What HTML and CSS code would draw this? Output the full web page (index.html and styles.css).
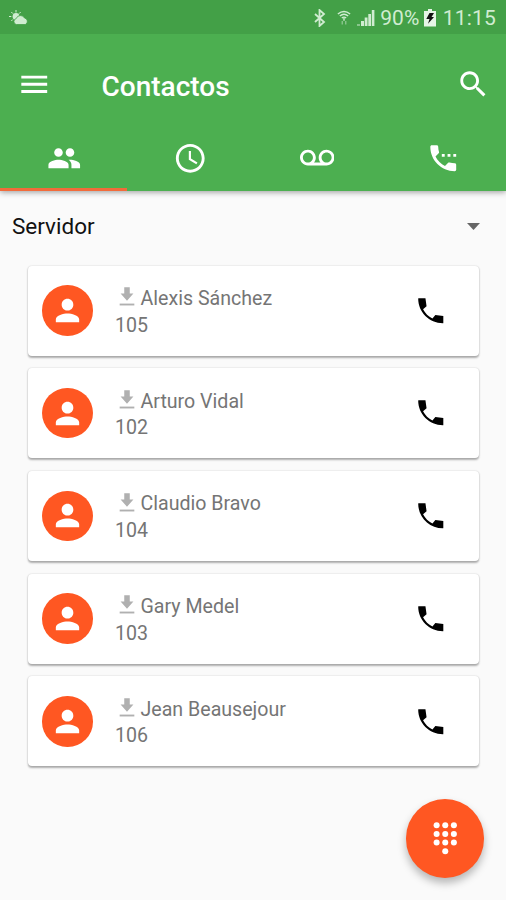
FILE: index.html
```html
<!DOCTYPE html>
<html lang="es">
<head>
<meta charset="utf-8">
<title>Contactos</title>
<link rel="stylesheet" href="styles.css">
</head>
<body>
<svg class="defs" aria-hidden="true">
  <symbol id="person" viewBox="0 0 24 24"><path d="M12 12c2.210 0 4-1.790 4-4s-1.790-4-4-4-4 1.790-4 4 1.790 4 4 4zm0 2c-2.670 0-8 1.340-8 4v2h16v-2c0-2.660-5.330-4-8-4z"/></symbol>
  <symbol id="download" viewBox="0 0 24 24" preserveAspectRatio="none"><path d="M19 9h-4V3H9v6H5l7 7 7-7z"/><path d="M4 18.800h16v1.800H4z"/></symbol>
  <symbol id="call" viewBox="0 0 24 24"><path d="M6.620 10.790c1.440 2.830 3.760 5.140 6.590 6.590l2.200-2.200c.27-.27.67-.36 1.020-.24 1.120.37 2.330.57 3.570.57.55 0 1 .45 1 1V20c0 .55-.45 1-1 1-9.390 0-17-7.610-17-17 0-.55.45-1 1-1h3.500c.55 0 1 .45 1 1 0 1.250.2 2.450.57 3.570.11.35.03.74-.25 1.020l-2.200 2.200z"/></symbol>
  <symbol id="dial" viewBox="0 0 24 24"><path d="M3.300 3H8.200L9 8.700 6.500 10.900C7.900 13.700 10.400 16.200 13.200 17.500L15.300 15 21 15.800V20.700Q21 21 20.700 21C10.900 21 3 13.100 3 3.300Q3 3 3.300 3z"/></symbol>
</svg>
<header class="header">
  <div class="status">
    <svg class="weather" viewBox="0 0 20 16"><g class="rays"><path d="M7 0v2.500M2.300 2l1.600 1.600M0 6.500h2.300M2.300 11l1.500-1.500M11.700 2l-1.600 1.600"/></g><circle cx="7" cy="6.500" r="3.400"/><path class="cloud" d="M7.500 14.500a3 3 0 0 1-.3-5.900 4.500 4.500 0 0 1 8.300-.6 3.400 3.400 0 0 1 .8 6.500z"/></svg>
    <svg class="bluetooth" viewBox="0 0 14 18"><path d="M2 5l9 8-4.500 4V1L11 5l-9 8"/></svg>
    <svg class="wifi" viewBox="0 0 16 18"><path d="M1 4.500Q8-1.500 15 4.500M3.200 6.800Q8 2.700 12.800 6.800M5.500 9Q8 7 10.500 9"/><path d="M8 9v3"/><path class="faint" d="M6 12.500v4M10 12.500v4"/></svg>
    <svg class="signal" viewBox="0 0 18 18"><path class="faint" d="M0 15h3v2H0z"/><path d="M4 12h3v5H4zM7.700 8.500h2.800V17H7.700zM11.300 5H14v12h-2.700zM14.800 1h2.600v16h-2.600z"/></svg>
    <span class="percent">90%</span>
    <svg class="battery" viewBox="0 0 12 18"><path d="M4 0h4v2h4v15.500H0V2h4z"/><path class="bolt" d="M5.500 4H10L7.500 8H10L4 14.800 5.500 10H2.300z"/></svg>
    <span class="time">11:15</span>
  </div>
  <div class="toolbar">
    <svg class="icon" viewBox="0 0 24 24"><path d="M3 18h18v-2H3v2zm0-5h18v-2H3v2zm0-7v2h18V6H3z"/></svg>
    <h1 class="title">Contactos</h1>
    <svg class="icon search" viewBox="0 0 24 24"><path d="M15.500 14h-.79l-.28-.27C15.410 12.590 16 11.110 16 9.500 16 5.910 13.090 3 9.500 3S3 5.910 3 9.500 5.910 16 9.500 16c1.610 0 3.090-.59 4.230-1.570l.27.28v.79l5 4.990L20.490 19l-4.990-5zm-6 0C7.010 14 5 11.990 5 9.500S7.010 5 9.500 5 14 7.010 14 9.500 11.990 14 9.500 14z"/></svg>
  </div>
  <nav class="tabs">
    <div class="tab active"><svg class="icon" viewBox="0 0 24 24"><path d="M16 11c1.660 0 2.990-1.340 2.990-3S17.660 5 16 5s-3 1.340-3 3 1.340 3 3 3zm-8 0c1.660 0 2.990-1.340 2.990-3S9.660 5 8 5 5 6.340 5 8s1.340 3 3 3zm0 2c-2.330 0-7 1.170-7 3.500V19h14v-2.500c0-2.330-4.670-3.500-7-3.500zm8 0c-.29 0-.62.020-.97.050 1.160.84 1.970 1.970 1.970 3.450V19h6v-2.500c0-2.330-4.670-3.500-7-3.500z"/></svg></div>
    <div class="tab"><svg class="icon" viewBox="0 0 24 24"><path d="M11.990 2C6.470 2 2 6.480 2 12s4.470 10 9.990 10C17.520 22 22 17.520 22 12S17.520 2 11.990 2zM12 20c-4.420 0-8-3.580-8-8s3.580-8 8-8 8 3.580 8 8-3.580 8-8 8zm.5-13H11v6l5.250 3.150.75-1.230-4.500-2.670z"/></svg></div>
    <div class="tab"><svg class="icon" viewBox="0 0 24 24"><path d="M18.500 6C15.460 6 13 8.460 13 11.500c0 1.330.47 2.550 1.260 3.500H9.740c.79-.95 1.260-2.170 1.260-3.500C11 8.460 8.540 6 5.500 6S0 8.460 0 11.500 2.460 17 5.500 17h13c3.040 0 5.500-2.460 5.500-5.500S21.540 6 18.500 6zm-13 9C3.570 15 2 13.430 2 11.500S3.570 8 5.500 8 9 9.570 9 11.500 7.430 15 5.500 15zm13 0c-1.930 0-3.500-1.570-3.500-3.500S16.570 8 18.500 8 22 9.570 22 11.500 20.430 15 18.500 15z"/></svg></div>
    <div class="tab"><svg class="icon" viewBox="0 0 24 24"><use href="#call"/><path d="M11 9h2v2h-2zM15 9h2v2h-2zM19 9h2v2h-2z"/></svg></div>
  </nav>
</header>
<main>
  <div class="server"><span>Servidor</span><svg class="caret" viewBox="0 0 14 8"><path d="M0 0h14L7 7.500z"/></svg></div>
  <ul class="contacts">
    <li class="card"><span class="avatar"><svg><use href="#person"/></svg></span><div class="info"><div class="name"><svg><use href="#download"/></svg>Alexis Sánchez</div><div>105</div></div><svg class="call"><use href="#dial"/></svg></li>
    <li class="card"><span class="avatar"><svg><use href="#person"/></svg></span><div class="info"><div class="name"><svg><use href="#download"/></svg>Arturo Vidal</div><div>102</div></div><svg class="call"><use href="#dial"/></svg></li>
    <li class="card"><span class="avatar"><svg><use href="#person"/></svg></span><div class="info"><div class="name"><svg><use href="#download"/></svg>Claudio Bravo</div><div>104</div></div><svg class="call"><use href="#dial"/></svg></li>
    <li class="card"><span class="avatar"><svg><use href="#person"/></svg></span><div class="info"><div class="name"><svg><use href="#download"/></svg>Gary Medel</div><div>103</div></div><svg class="call"><use href="#dial"/></svg></li>
    <li class="card"><span class="avatar"><svg><use href="#person"/></svg></span><div class="info"><div class="name"><svg><use href="#download"/></svg>Jean Beausejour</div><div>106</div></div><svg class="call"><use href="#dial"/></svg></li>
  </ul>
</main>
<div class="fab"><svg class="icon" viewBox="0 0 24 24"><circle cx="6" cy="3" r="2.100"/><circle cx="12" cy="3" r="2.100"/><circle cx="18" cy="3" r="2.100"/><circle cx="6" cy="9" r="2.100"/><circle cx="12" cy="9" r="2.100"/><circle cx="18" cy="9" r="2.100"/><circle cx="6" cy="15" r="2.100"/><circle cx="12" cy="15" r="2.100"/><circle cx="18" cy="15" r="2.100"/><circle cx="12" cy="21" r="2.100"/></svg></div>
</body>
</html>
```
FILE: styles.css
```css
* { box-sizing: border-box; }
body {
  margin: 0;
  height: 900px;
  overflow: hidden;
  position: relative;
  background: #fafafa;
  font-family: Roboto, "Liberation Sans", sans-serif;
}
svg { display: block; flex: none; fill: currentColor; }
.defs { position: absolute; width: 0; height: 0; }
.icon { width: 34.500px; height: 34.500px; }

.header {
  height: 191px;
  background: #4caf50;
  color: #fff;
  box-shadow: 0 1px 6px rgba(0, 0, 0, .4);
}
.status {
  display: flex;
  align-items: center;
  height: 34px;
  padding: 2px 10px 0 9px;
  background: #43a047;
  color: #d0ecd1;
  font-size: 21px;
}
.weather { width: 20px; height: 16px; margin-right: auto; }
.rays { fill: none; stroke: currentColor; stroke-width: 1; }
.cloud { stroke: #43a047; stroke-width: .8; }
.bluetooth { width: 14px; height: 18px; margin-right: 10px; fill: none; stroke: currentColor; stroke-width: 1.800; }
.wifi { width: 14px; height: 18px; margin-right: 6px; fill: none; stroke: currentColor; stroke-width: 1.600; }
.signal { width: 18px; height: 18px; margin-right: 5px; }
.faint { opacity: .5; }
.percent { width: 43.500px; letter-spacing: .1px; }
.battery { width: 12px; height: 18px; margin-right: 7px; color: #e6f5e6; }
.bolt { fill: #111; }
.time { letter-spacing: .2px; }

.toolbar {
  display: flex;
  align-items: center;
  height: 91px;
  padding: 9px 16px 0 17px;
}
.title { margin: 6px 0 0 50px; font-size: 28px; font-weight: 500; line-height: 34px; }
.search { margin-left: auto; }

.tabs { display: flex; height: 66px; }
.tab {
  flex: 1;
  display: flex;
  justify-content: center;
  align-items: center;
  padding: 3px 0 0 1px;
  border-bottom: 3px solid transparent;
}
.active { border-bottom-color: #f26b3a; }

.server {
  display: flex;
  justify-content: space-between;
  align-items: center;
  height: 74.500px;
  padding: 0 26px 4px 12px;
  font-size: 22.500px;
  color: #111;
}
.caret { width: 13px; height: 7.500px; fill: #666; }

.contacts {
  display: flex;
  flex-direction: column;
  gap: 12.700px;
  margin: 0;
  padding: 0 27px 0 28px;
  list-style: none;
}
.card {
  display: flex;
  align-items: center;
  height: 90px;
  padding: 0 32px 0 14px;
  border-radius: 4px;
  background: #fff;
  box-shadow: 0 1.500px 2px rgba(0, 0, 0, .3), 0 0 2px rgba(0, 0, 0, .12);
}
.avatar {
  display: flex;
  justify-content: center;
  align-items: center;
  width: 50.500px;
  height: 50.500px;
  border-radius: 50%;
  background: #ff5722;
  color: #fff;
}
.avatar svg { width: 35px; height: 35px; }
.info {
  flex: 1;
  margin: 4.500px 0 0 22.500px;
  color: #757575;
  font-size: 19.600px;
  line-height: 26.700px;
}
.name { display: flex; align-items: center; height: 26.700px; }
.name svg { width: 22px; height: 25px; margin: -5px 2.500px 0 1px; color: #b0b0b0; }
.call { width: 33.500px; height: 33.500px; color: #000; }

.fab {
  position: absolute;
  left: 405.500px;
  top: 799px;
  display: flex;
  justify-content: center;
  align-items: center;
  width: 78.500px;
  height: 78.500px;
  border-radius: 50%;
  background: #ff5722;
  color: #fff;
  box-shadow: 0 5px 9px rgba(0, 0, 0, .28);
}
```
